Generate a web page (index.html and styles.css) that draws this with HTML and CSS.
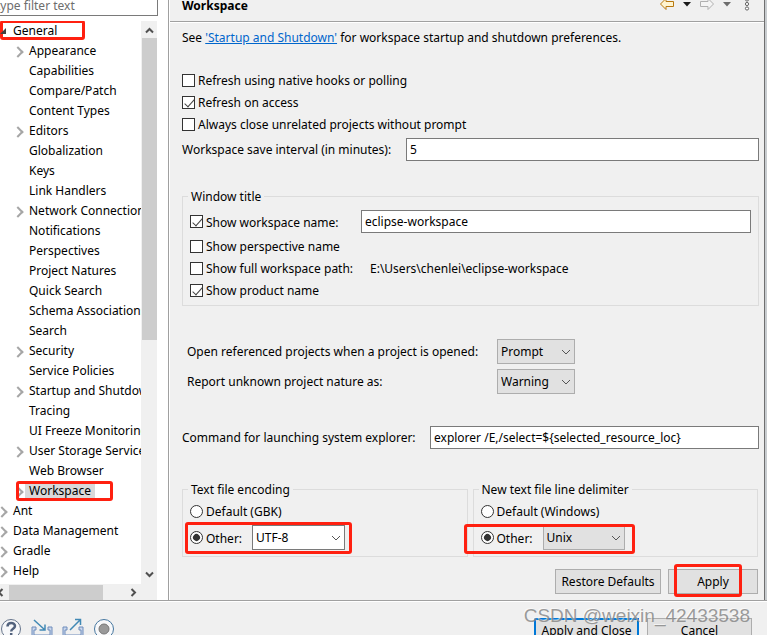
FILE: index.html
```
<!DOCTYPE html>
<html lang="en">
<head>
  <meta charset="utf-8">
  <title>Preferences</title>
  <link rel="stylesheet" href="styles.css">
</head>
<body>

<div class="dialog">
  <div class="panes">

    <div class="sidebar">
      <input class="filter" type="text" placeholder="type filter text" aria-label="Filter">
      <div class="tree-box">
        <ul class="tree">
          <li class="open"><span class="mark mark-general"></span>
            <svg class="twisty" viewBox="0 0 8 8"><path d="M7 1v6H1z" fill="#404040"/></svg>General</li>
          <li class="child has-kids">Appearance</li>
          <li class="child">Capabilities</li>
          <li class="child">Compare/Patch</li>
          <li class="child">Content Types</li>
          <li class="child has-kids">Editors</li>
          <li class="child">Globalization</li>
          <li class="child">Keys</li>
          <li class="child">Link Handlers</li>
          <li class="child has-kids">Network Connections</li>
          <li class="child">Notifications</li>
          <li class="child">Perspectives</li>
          <li class="child">Project Natures</li>
          <li class="child">Quick Search</li>
          <li class="child">Schema Associations</li>
          <li class="child">Search</li>
          <li class="child has-kids">Security</li>
          <li class="child">Service Policies</li>
          <li class="child has-kids">Startup and Shutdown</li>
          <li class="child">Tracing</li>
          <li class="child">UI Freeze Monitoring</li>
          <li class="child has-kids">User Storage Service</li>
          <li class="child">Web Browser</li>
          <li class="child has-kids"><span class="selected">Workspace</span><span class="mark mark-workspace"></span></li>
          <li class="has-kids">Ant</li>
          <li class="has-kids">Data Management</li>
          <li class="has-kids">Gradle</li>
          <li class="has-kids">Help</li>
        </ul>
        <div class="vscroll">
          <svg width="9" height="7" viewBox="0 0 9 7"><path d="M1 5.500l3.500-3.500 3.500 3.500"/></svg>
          <div class="vthumb"></div>
          <svg width="9" height="7" viewBox="0 0 9 7"><path d="M1 1.500l3.500 3.500 3.500-3.500"/></svg>
        </div>
        <div class="hscroll">
          <svg width="7" height="9" viewBox="0 0 7 9"><path d="M5.500 1l-3.500 3.500 3.500 3.500"/></svg>
          <div class="hthumb"></div>
          <svg width="7" height="9" viewBox="0 0 7 9"><path d="M1.500 1l3.500 3.500-3.500 3.500"/></svg>
        </div>
      </div>
    </div>

    <div class="page">
      <div class="page-header">
        <h1>Workspace</h1>
        <div class="nav">
          <svg width="16" height="14" viewBox="0 0 16 14"><path d="M1.500 7l5.500-5.500v3h7.500v5H7v3z" fill="#fff4cf" stroke="#b8780f" stroke-linejoin="round"/></svg>
          <svg width="8" height="5" viewBox="0 0 8 5"><path d="M0 0h8L4 4.500z" fill="#1a1a1a"/></svg>
          <svg class="forward" width="16" height="14" viewBox="0 0 16 14"><path d="M14.500 7L9 1.500v3H1.500v5H9v3z" fill="#f4f4f4" stroke="#b0b0b0" stroke-linejoin="round"/></svg>
          <svg width="8" height="5" viewBox="0 0 8 5"><path d="M0 0h8L4 4.500z" fill="#6d6d6d"/></svg>
          <svg class="dots" width="6" height="14" viewBox="0 0 6 14" fill="#fff" stroke="#666"><circle cx="3" cy="2.500" r="1.600"/><circle cx="3" cy="7" r="1.600"/><circle cx="3" cy="11.500" r="1.600"/></svg>
        </div>
      </div>

      <form class="page-body">
        <p class="intro">See <a href="#">'Startup and Shutdown'</a> for workspace startup and shutdown preferences.</p>

        <label class="check"><input type="checkbox">Refresh using native hooks or polling</label>
        <label class="check"><input type="checkbox" checked>Refresh on access</label>
        <label class="check"><input type="checkbox">Always close unrelated projects without prompt</label>
        <div class="field interval">
          <label for="interval">Workspace save interval (in minutes):</label>
          <input type="text" id="interval" value="5">
        </div>

        <fieldset class="window-title">
          <legend>Window title</legend>
          <div class="field name-row">
            <label class="check"><input type="checkbox" checked>Show workspace name:</label>
            <input type="text" value="eclipse-workspace" aria-label="Workspace name">
          </div>
          <label class="check"><input type="checkbox">Show perspective name</label>
          <div class="field path-row">
            <label class="check"><input type="checkbox">Show full workspace path:</label>
            <span>E:\Users\chenlei\eclipse-workspace</span>
          </div>
          <label class="check"><input type="checkbox" checked>Show product name</label>
        </fieldset>

        <div class="combos">
          <label for="openRef">Open referenced projects when a project is opened:</label>
          <div class="select">
            <select id="openRef"><option>Prompt</option></select>
            <svg viewBox="0 0 10 6"><path d="M1 1l4 4 4-4"/></svg>
          </div>
          <label for="nature">Report unknown project nature as:</label>
          <div class="select">
            <select id="nature"><option>Warning</option></select>
            <svg viewBox="0 0 10 6"><path d="M1 1l4 4 4-4"/></svg>
          </div>
        </div>

        <div class="field command">
          <label for="command">Command for launching system explorer:</label>
          <input type="text" id="command" value="explorer /E,/select=${selected_resource_loc}">
        </div>

        <div class="groups">
          <fieldset>
            <legend>Text file encoding</legend>
            <label class="check"><input type="radio" name="encoding">Default (GBK)</label>
            <div class="field other">
              <label class="check"><input type="radio" name="encoding" checked>Other:</label>
              <div class="select editable">
                <select aria-label="Encoding"><option>UTF-8</option></select>
                <svg viewBox="0 0 10 6"><path d="M1 1l4 4 4-4"/></svg>
              </div>
              <span class="mark mark-encoding"></span>
            </div>
          </fieldset>
          <fieldset>
            <legend>New text file line delimiter</legend>
            <label class="check"><input type="radio" name="delimiter">Default (Windows)</label>
            <div class="field other">
              <label class="check"><input type="radio" name="delimiter" checked>Other:</label>
              <div class="select delimiter">
                <select aria-label="Line delimiter"><option>Unix</option></select>
                <svg viewBox="0 0 10 6"><path d="M1 1l4 4 4-4"/></svg>
              </div>
              <span class="mark mark-delimiter"></span>
            </div>
          </fieldset>
        </div>

        <div class="page-buttons">
          <button type="button" class="restore">Restore Defaults</button>
          <button type="button" class="apply">Apply<span class="mark mark-apply"></span></button>
        </div>
      </form>
    </div>
    <div class="backdrop"></div>
  </div>

  <div class="footer">
    <div class="tools">
      <svg width="22" height="22" viewBox="0 0 22 22"><circle cx="11" cy="11" r="9.500" fill="#f7f8fa" stroke="#66758c"/><path d="M7.500 8.500c0-5 7.500-4.500 7.500-.5 0 3-3.800 2.500-3.800 5.500M11.200 15v2.500" fill="none" stroke="#52627d" stroke-width="2.500"/></svg>
      <svg width="22" height="22" viewBox="0 0 22 22"><path d="M1 9v12h20V9h-4v3h2v5H3v-5h2V9z" fill="#c9d6ec" stroke="#6f8dbc"/><path d="M3 2l11 10M14 6.500V12H8.500" fill="none" stroke="#4189b5" stroke-width="1.500"/></svg>
      <svg width="22" height="22" viewBox="0 0 22 22"><path d="M1 9v12h20V9h-4v3h2v5H3v-5h2V9z" fill="#c9d6ec" stroke="#6f8dbc"/><path d="M8 12L18 2M13 1.500h5.500V7" fill="none" stroke="#4189b5" stroke-width="1.500"/></svg>
      <svg width="22" height="22" viewBox="0 0 22 22"><circle cx="11" cy="11" r="9.500" fill="#f7f8fa" stroke="#4677a0"/><circle cx="11" cy="11" r="5" fill="#999" stroke="#777"/></svg>
    </div>
    <div class="footer-buttons">
      <button type="button" class="default">Apply and Close</button>
      <button type="button">Cancel</button>
    </div>
    <div class="watermark">CSDN @weixin_42433538</div>
  </div>
</div>

</body>
</html>
```
FILE: styles.css
```
* {
  box-sizing: border-box;
}
body {
  margin: 0;
  height: 100vh;
  overflow: hidden;
  background: #f0f0f0;
  color: #000;
  font: 12px/20px "Noto Sans", "Noto Sans CJK SC", sans-serif;
}
input, select, button {
  font: inherit;
  color: inherit;
  margin: 0;
}
svg {
  display: block;
  flex: none;
}
.panes {
  display: flex;
}

/* red highlight boxes */
.mark {
  position: absolute;
  border: 3px solid #ff2010;
  border-radius: 3px;
  pointer-events: none;
}

/* left side */
.sidebar {
  display: flex;
  flex-direction: column;
  width: 169px;
  padding-right: 11px;
  background: #fff;
  border-right: 1px solid #a0a0a0;
}
.filter {
  width: 166px;
  height: 24px;
  margin: -8px 0 5px -8px;
  padding: 2px 0 0 2px;
  border: 1px solid #7a7a7a;
  background: #fff;
}
.filter::placeholder {
  color: #6d6d6d;
}
.tree-box {
  flex: 1;
  display: grid;
  grid-template-columns: 1fr 16px;
  grid-template-rows: 1fr 16px;
  background: #f0f0f0;
}
.tree {
  margin: 0;
  padding: 0;
  list-style: none;
  overflow: hidden;
  background: #fff;
  white-space: nowrap;
}
.tree li {
  position: relative;
  height: 20px;
  padding-left: 13px;
}
.tree .child {
  padding-left: 29px;
}
.twisty {
  position: absolute;
  left: -1px;
  top: 6px;
  width: 8px;
  height: 8px;
}
.has-kids::before {
  content: "";
  position: absolute;
  left: -2px;
  top: 7px;
  width: 6px;
  height: 6px;
  border: solid #a6a6a6;
  border-width: 2px 2px 0 0;
  transform: rotate(45deg);
}
.child.has-kids::before {
  left: 14px;
}
.selected {
  display: inline-block;
  margin-left: -4px;
  padding: 0 4px;
  background: #d9d9d9;
}
.mark-general {
  left: 0;
  top: -1px;
  width: 85px;
  height: 20px;
}
.mark-workspace {
  left: 16px;
  top: 0;
  width: 97px;
  height: 20px;
}
.vscroll {
  display: flex;
  flex-direction: column;
  align-items: center;
  padding: 6px 0;
}
.vscroll svg:last-child {
  margin-top: auto;
}
.vthumb {
  width: 15px;
  height: 302px;
  margin-top: 4px;
  background: #cdcdcd;
}
.hscroll {
  display: flex;
  align-items: center;
  margin-left: -3px;
}
.vscroll svg, .hscroll svg {
  fill: none;
  stroke: #505050;
  stroke-width: 2;
}
.hthumb {
  width: 94px;
  height: 15px;
  margin: 0 27px 0 5px;
  background: #cdcdcd;
}

/* preference page */
.page {
  flex: 1;
  border-left: 1px solid #fff;
}
.backdrop {
  width: 3px;
  border-left: 1px solid #6f6f6f;
  background: #c8cccf;
}
.page-header {
  display: flex;
  justify-content: space-between;
  height: 23px;
  padding: 0 14px 0 12px;
  border-bottom: 1px solid #fff;
  box-shadow: inset 0 -1px #a0a0a0;
}
h1 {
  margin: -4px 0 0;
  font-size: 12px;
  line-height: 20px;
}
.nav {
  display: flex;
  align-items: center;
  gap: 8px;
  height: 14px;
  margin-top: -3px;
}
.nav .dots {
  margin: 0 0 0 5px;
}
.page-body {
  padding: 5px 5px 6px 12px;
}
.intro {
  margin: 0 0 21px;
}
a {
  color: #0066cc;
}
.check {
  display: flex;
  align-items: center;
  height: 22px;
  padding-top: 2px;
}
.check input {
  appearance: none;
  position: relative;
  flex: none;
  width: 13px;
  height: 13px;
  margin: -2px 3px 0 0;
  border: 1px solid #333;
  background: #fff;
}
.check input:checked::after {
  content: "";
  position: absolute;
  left: 4px;
  top: 0;
  width: 4px;
  height: 9px;
  border: solid #444;
  border-width: 0 1px 1px 0;
  transform: rotate(42deg);
}
.check input[type="radio"] {
  border-radius: 50%;
}
.check input[type="radio"]:checked::after {
  left: 2px;
  top: 2px;
  width: 7px;
  height: 7px;
  border: 0;
  border-radius: 50%;
  background: #333;
}
.field {
  position: relative;
  display: flex;
  align-items: center;
}
input[type="text"] {
  padding-left: 3px;
  border: 1px solid #7a7a7a;
  border-radius: 0;
  background: #fff;
}
.field > input[type="text"] {
  flex: 1;
  min-width: 0;
  height: 23px;
}
.interval {
  margin-top: 3px;
}
.interval label {
  width: 224px;
}
fieldset {
  min-width: 0;
  margin: 0;
  padding: 3px 7px 6px;
  border: 1px solid #dcdcdc;
}
legend {
  margin-left: -2px;
  padding: 2px 3px 0;
  line-height: 14px;
}
.window-title {
  margin-top: 27px;
  padding: 6px 7px 4px;
}
.name-row {
  margin-bottom: 2px;
}
.name-row .check {
  width: 171px;
}
.path-row .check {
  width: 180px;
}
.path-row span {
  padding-top: 2px;
}
.combos {
  display: grid;
  grid-template-columns: 310px 78px;
  gap: 5px 0;
  align-items: center;
  margin: 33px 0 32px 5px;
}
.select {
  position: relative;
}
.select select {
  display: block;
  appearance: none;
  width: 100%;
  height: 25px;
  padding: 0 3px;
  border: 1px solid #adadad;
  border-radius: 0;
  background: #e1e1e1;
}
.select svg {
  position: absolute;
  right: 4px;
  top: 10px;
  width: 10px;
  height: 6px;
  fill: none;
  stroke: #555;
  pointer-events: none;
}
.editable {
  width: 93px;
}
.editable select {
  border-color: #7a7a7a;
  background: #fff;
}
.delimiter {
  width: 82px;
}
.command label {
  width: 248px;
}
.groups {
  display: grid;
  grid-template-columns: 1fr 1fr;
  gap: 5px;
  margin: 32px 1px 12px 0;
}
.other {
  margin-top: 3px;
}
.other .check {
  width: 62px;
}
.mark-encoding {
  left: -5px;
  top: -3px;
  width: 167px;
  height: 32px;
}
.mark-delimiter {
  left: -17px;
  top: -1px;
  width: 171px;
  height: 30px;
}
button {
  position: relative;
  height: 25px;
  padding: 0;
  border: 1px solid #adadad;
  background: #e1e1e1;
}
.page-buttons {
  display: flex;
  justify-content: flex-end;
  gap: 7px;
  margin-right: 1px;
}
.restore {
  width: 106px;
}
.apply {
  width: 90px;
}
.mark-apply {
  left: 5px;
  top: -6px;
  width: 68px;
  height: 33px;
}

/* bottom bar */
.footer {
  position: relative;
  display: flex;
  justify-content: space-between;
  border-top: 1px solid #a0a0a0;
  padding: 17px 15px 10px 0;
  box-shadow: inset 0 1px #fff;
}
.tools {
  display: flex;
  gap: 9px;
}
.footer-buttons {
  display: flex;
  gap: 8px;
}
.footer-buttons button {
  width: 105px;
}
.footer-buttons .default {
  border: 2px solid #0078d7;
}
.watermark {
  position: absolute;
  right: 17px;
  top: 3px;
  font: 19px/24px "Liberation Sans", sans-serif;
  color: rgba(130, 130, 130, 0.8);
  text-shadow: -1px -1px rgba(255, 255, 255, 0.6);
  white-space: nowrap;
  pointer-events: none;
}
```
